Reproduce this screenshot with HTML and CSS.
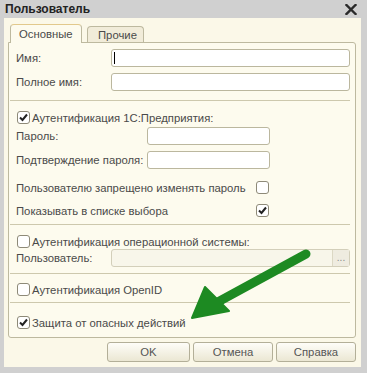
FILE: index.html
```html
<!DOCTYPE html>
<html lang="ru">
<head>
    <meta charset="UTF-8">
    <title>Пользователь</title>
    <link rel="stylesheet" href="styles.css">
</head>
<body>

    <div class="titlebar">
        <span class="title">Пользователь</span>
        <svg class="close" width="12" height="11" viewBox="0 0 12 11">
            <path d="M1.5 1 L10.5 10 M10.5 1 L1.5 10" stroke="#2a2a2a" stroke-width="2.4" stroke-linecap="square"/>
        </svg>
    </div>

    <div class="window">
        <div class="tabs">
            <div class="tab tab-active">Основные</div>
            <div class="tab tab-other">Прочие</div>
        </div>

        <div class="panel">
            <div class="row row-name">
                <span class="lbl lbl-short">Имя:</span>
                <div class="input input-wide"><span class="caret"></span></div>
            </div>
            <div class="row row-fullname">
                <span class="lbl lbl-short">Полное имя:</span>
                <div class="input input-wide"></div>
            </div>

            <div class="sep sep-1"></div>

            <div class="crow crow-1c">
                <span class="check checked"><svg width="11" height="11" viewBox="0 0 11 11"><path d="M2 5.5 L4.5 8 L9 2.5" fill="none" stroke="#222" stroke-width="2"/></svg></span>
                <span class="ctext">Аутентификация 1С:Предприятия:</span>
            </div>
            <div class="row row-pass">
                <span class="lbl lbl-long">Пароль:</span>
                <div class="input input-short"></div>
            </div>
            <div class="row row-confirm">
                <span class="lbl lbl-long">Подтверждение пароля:</span>
                <div class="input input-short"></div>
            </div>
            <div class="crow crow-deny">
                <span class="lbl lbl-right">Пользователю запрещено изменять пароль</span>
                <span class="check"></span>
            </div>
            <div class="crow crow-show">
                <span class="lbl lbl-right">Показывать в списке выбора</span>
                <span class="check checked"><svg width="11" height="11" viewBox="0 0 11 11"><path d="M2 5.5 L4.5 8 L9 2.5" fill="none" stroke="#222" stroke-width="2"/></svg></span>
            </div>

            <div class="sep sep-2"></div>

            <div class="crow crow-os">
                <span class="check"></span>
                <span class="ctext">Аутентификация операционной системы:</span>
            </div>
            <div class="row row-osuser">
                <span class="lbl lbl-short">Пользователь:</span>
                <div class="input input-wide input-disabled">
                    <span class="pick">...</span>
                </div>
            </div>

            <div class="sep sep-3"></div>

            <div class="crow crow-openid">
                <span class="check"></span>
                <span class="ctext">Аутентификация OpenID</span>
            </div>

            <div class="sep sep-4"></div>

            <div class="crow crow-safe">
                <span class="check checked"><svg width="11" height="11" viewBox="0 0 11 11"><path d="M2 5.5 L4.5 8 L9 2.5" fill="none" stroke="#222" stroke-width="2"/></svg></span>
                <span class="ctext">Защита от опасных действий</span>
            </div>
        </div>

        <div class="buttons">
            <div class="btn btn-ok">OK</div>
            <div class="btn">Отмена</div>
            <div class="btn">Справка</div>
        </div>
    </div>

    <!-- green pointer drawn over the dialog -->
    <svg class="arrow" width="367" height="373" viewBox="0 0 367 373">
        <line x1="306" y1="254" x2="216" y2="303" stroke="#1d8a22" stroke-width="9" stroke-linecap="round"/>
        <polygon points="192,318 205,287 229,311" fill="#1d8a22" stroke="#1d8a22" stroke-width="2" stroke-linejoin="round"/>
    </svg>

</body>
</html>
```

FILE: styles.css
```css
body {
    margin: 0;
    background-color: #d0d0d0;
    font-family: "Liberation Sans", Arial, sans-serif;
    font-size: 11.3px;
    color: #4a4a4a;
    width: 367px;
    height: 373px;
    overflow: hidden;
    position: relative;
}
.titlebar {
    height: 18px;
    display: flex;
    align-items: center;
    justify-content: space-between;
    padding: 0 10px 0 5px;
}
.title {
    font-weight: bold;
    color: #222;
    font-size: 12px;
}
.close {
    margin-top: 1px;
}
.window {
    margin: 0 6px 0 4px;
    height: 349px;
    background-color: #fbf8e8;
    padding-top: 6px;
    box-sizing: border-box;
}
.tabs {
    display: flex;
    align-items: flex-end;
    height: 18px;
    padding-left: 6px;
    gap: 5px;
}
.tab {
    box-sizing: border-box;
    border: 1px solid #bdb99f;
    border-bottom: none;
    border-radius: 4px 4px 0 0;
    line-height: 16px;
}
.tab-active {
    width: 72px;
    height: 19px;
    margin-bottom: -1px;
    padding-left: 8px;
    padding-top: 1px;
    background-color: #fdfbee;
    border-top-color: #e2c98c;
    position: relative;
    z-index: 1;
}
.tab-other {
    width: 57px;
    height: 16px;
    padding-left: 10px;
    background-color: #f1ecd9;
}
.panel {
    box-sizing: border-box;
    width: 348px;
    height: 296px;
    margin-left: 4px;
    border: 1px solid #bdb99f;
    border-radius: 0 3px 3px 3px;
    background-color: #fdfbee;
    padding-left: 7px;
}
.row, .crow {
    display: flex;
    align-items: center;
}
.row {
    height: 18px;
}
.crow {
    height: 13px;
}
.row-name { margin-top: 6px; }
.row-fullname { margin-top: 6px; }
.sep-1 { margin-top: 9px; }
.crow-1c { margin-top: 10px; }
.row-pass { margin-top: 3px; }
.row-confirm { margin-top: 6px; }
.crow-deny { margin-top: 12px; }
.crow-show { margin-top: 10px; }
.sep-2 { margin-top: 7px; }
.crow-os { margin-top: 10px; }
.row-osuser { margin-top: 1px; }
.sep-3 { margin-top: 6px; }
.crow-openid { margin-top: 9px; }
.sep-4 { margin-top: 6px; }
.crow-safe { margin-top: 13px; }

.sep {
    height: 1px;
    background-color: #cdc8ad;
    margin-left: -6px;
    margin-right: 5px;
}
.lbl {
    flex: none;
    white-space: nowrap;
}
.lbl-short { width: 95px; }
.lbl-long { width: 131px; }
.lbl-right { width: 240px; }
.input {
    box-sizing: border-box;
    height: 18px;
    border: 1px solid #bbb79e;
    border-radius: 3px;
    background-color: #fff;
    position: relative;
}
.input-wide { width: 239px; }
.input-short { width: 123px; }
.input-disabled {
    background-color: #f8f6ea;
    border-color: #d3cfba;
}
.caret {
    position: absolute;
    left: 2px;
    top: 2px;
    width: 1px;
    height: 12px;
    background-color: #000;
}
.pick {
    position: absolute;
    right: 0;
    top: 0;
    bottom: 0;
    width: 16px;
    border-left: 1px solid #dcd8c4;
    background-color: #efece0;
    color: #8a8a8a;
    font-size: 10px;
    text-align: center;
    line-height: 16px;
}
.check {
    box-sizing: border-box;
    flex: none;
    width: 13px;
    height: 13px;
    border: 1px solid #8e8a78;
    border-radius: 3px;
    background-color: #fff;
    display: flex;
    align-items: center;
    justify-content: center;
}
.crow-1c .check, .crow-os .check, .crow-openid .check, .crow-safe .check {
    margin-left: 1px;
}
.ctext {
    margin-left: 2px;
    white-space: nowrap;
}
.buttons {
    width: 348px;
    margin: 4px 0 0 4px;
    display: flex;
    justify-content: flex-end;
    gap: 3px;
}
.btn {
    box-sizing: border-box;
    width: 80px;
    height: 20px;
    border: 1px solid #b3af98;
    border-radius: 3px;
    background: linear-gradient(#fefdf8, #ebe7d3);
    text-align: center;
    line-height: 18px;
    color: #555;
}
.btn-ok {
    width: 83px;
}
.arrow {
    position: absolute;
    left: 0;
    top: 0;
    pointer-events: none;
}
```
